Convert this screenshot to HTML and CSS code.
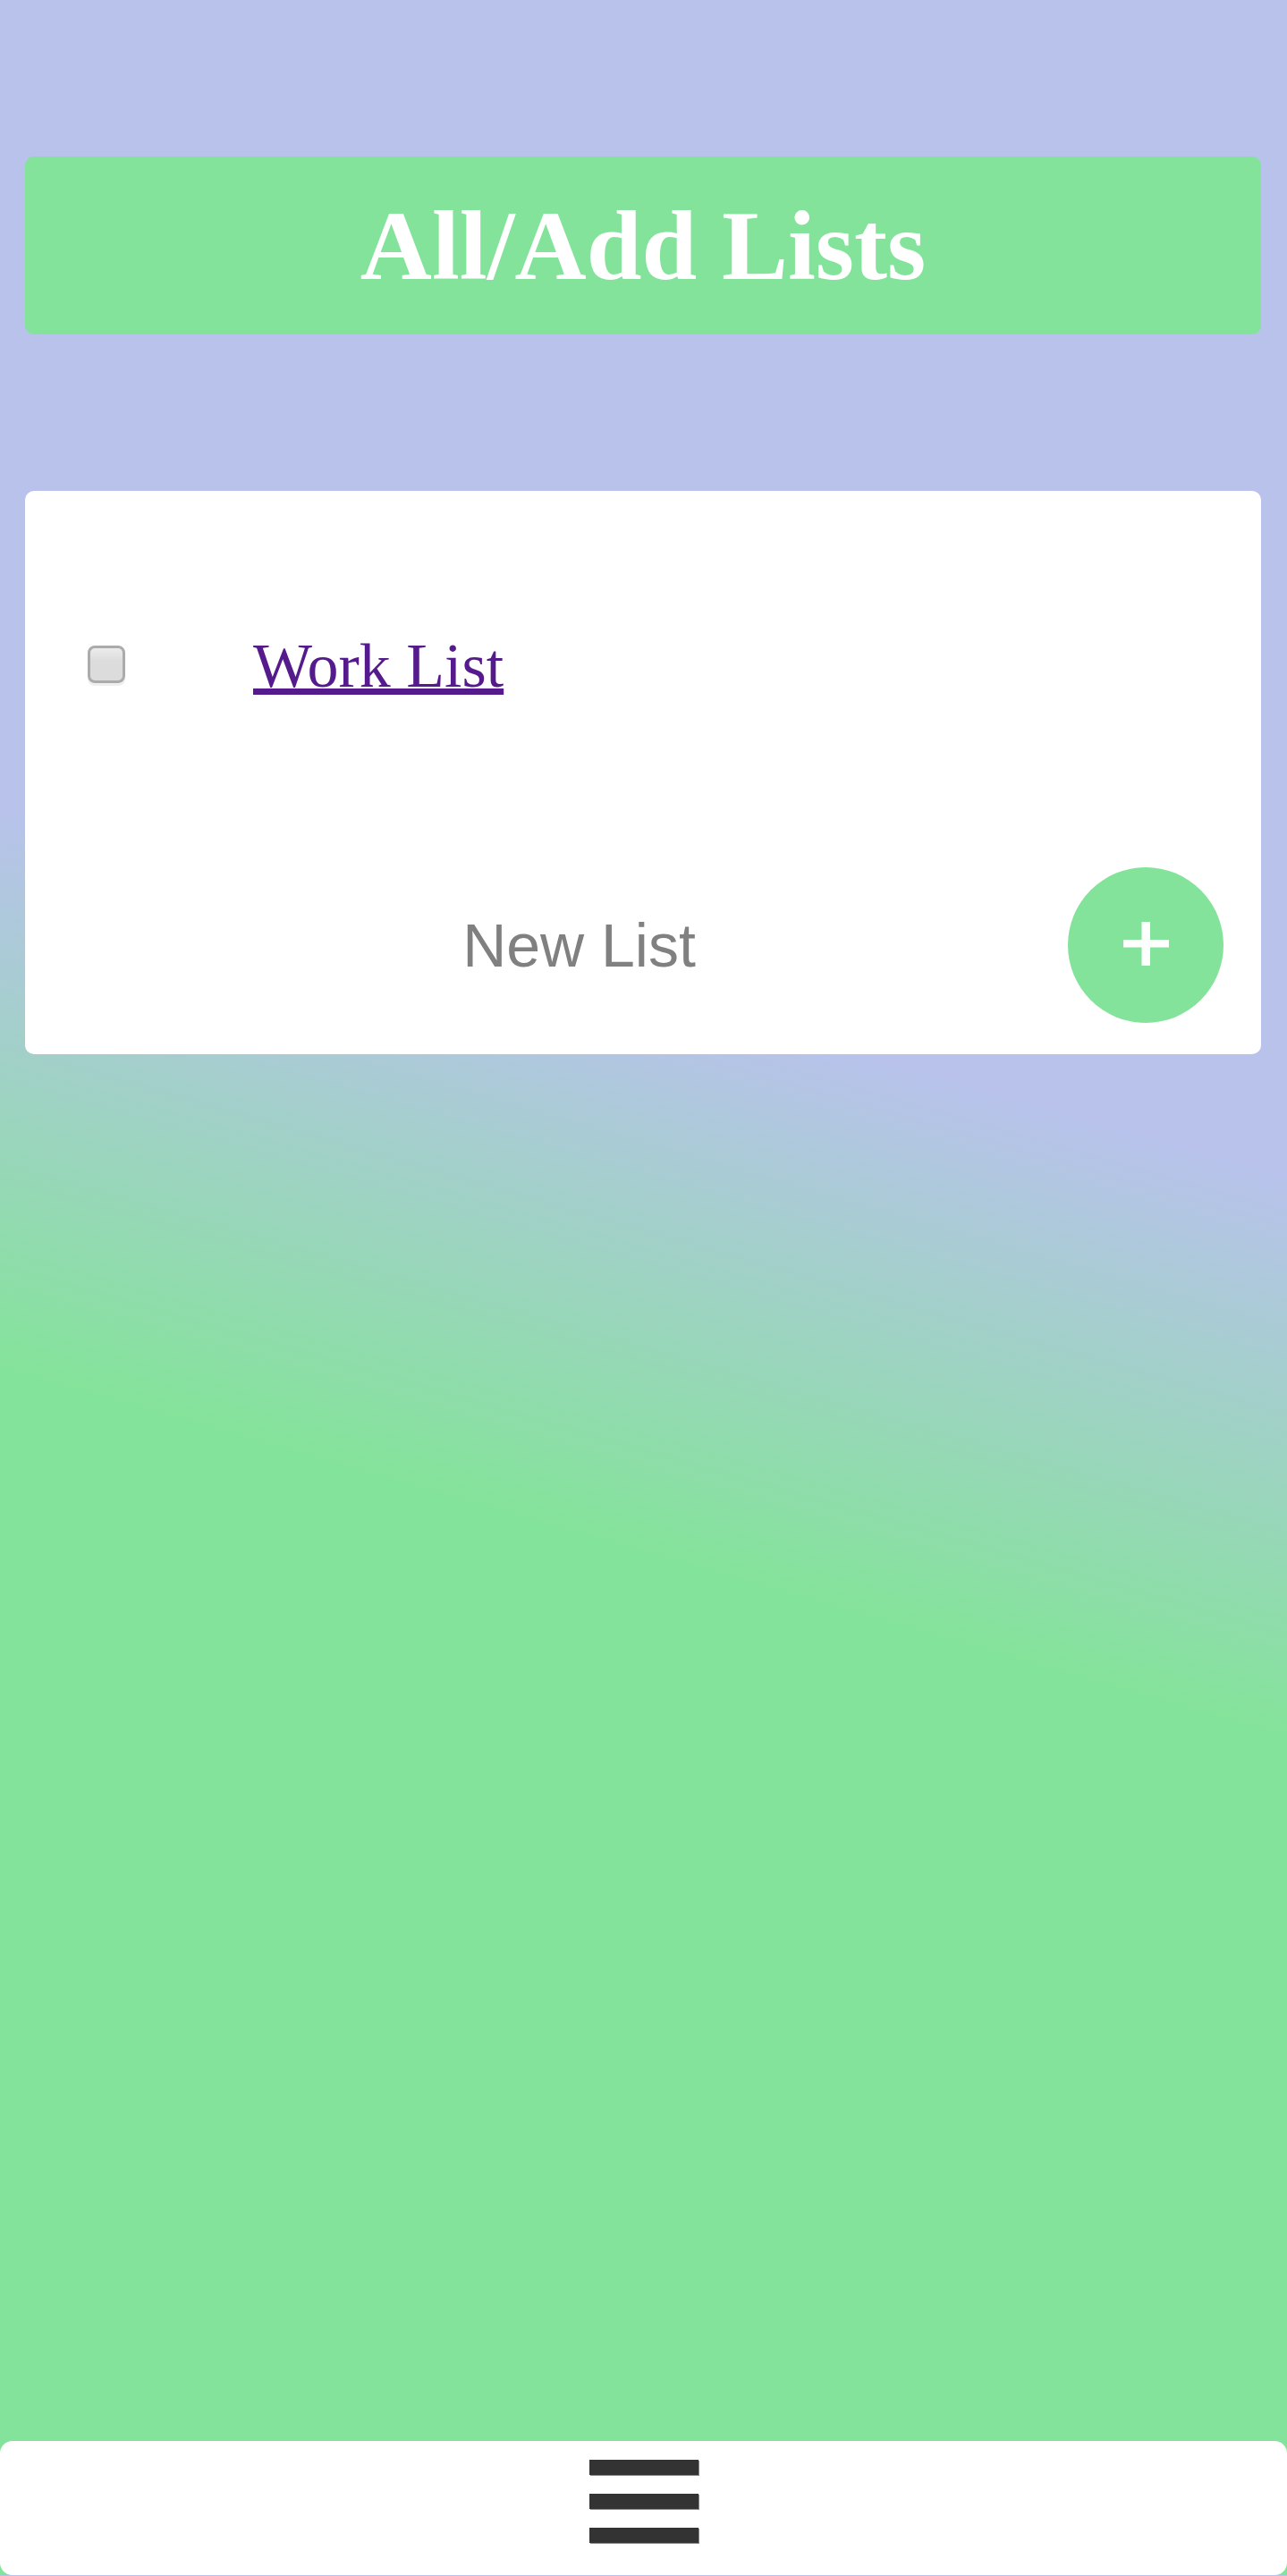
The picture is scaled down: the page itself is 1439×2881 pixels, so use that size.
FILE: index.html
```html
<!DOCTYPE html>
<html lang="en">
<head>
<meta charset="utf-8">
<title>All/Add Lists</title>
<link rel="stylesheet" href="styles.css">
</head>
<body>
  <header class="title-bar">
    <h1 class="title">All/Add Lists</h1>
  </header>

  <section class="card">
    <div class="list-row">
      <input class="check" type="checkbox" aria-label="Select Work List">
      <a class="list-link" href="#work">Work List</a>
    </div>
    <form class="new-row" onsubmit="return false">
      <input class="new-input" type="text" placeholder="New List">
      <button class="add-btn" type="button" aria-label="Add list">
        <svg width="51" height="49" viewBox="0 0 51 49" aria-hidden="true">
          <rect x="0" y="20" width="51" height="8.5" fill="#fff"/>
          <rect x="20.5" y="0" width="9.5" height="49" fill="#fff"/>
        </svg>
      </button>
    </form>
  </section>

  <nav class="bottom-bar">
    <span class="bar"></span>
    <span class="bar"></span>
    <span class="bar"></span>
  </nav>
</body>
</html>
```

FILE: styles.css
```css
html {
  margin: 0;
}

body {
  margin: 0;
  min-height: 2880px;
  display: flex;
  flex-direction: column;
  font-family: "Liberation Serif", "Times New Roman", serif;
  background: linear-gradient(16deg, #84e39a 41%, #b8c2eb 60%);
}

.title-bar {
  margin: 175px 29px 0 28px;
  height: 199px;
  border-radius: 10px;
  background: #84e39a;
  display: flex;
  align-items: center;
  justify-content: center;
}

.title {
  margin: 0;
  font-family: "Liberation Serif", "Times New Roman", serif;
  font-weight: bold;
  font-size: 111px;
  line-height: 1;
  color: #ffffff;
}

.card {
  box-sizing: border-box;
  margin: 175px 29px 0 28px;
  height: 630px;
  background: #ffffff;
  border-radius: 10px;
  padding: 0 42px 35px 70px;
  display: flex;
  flex-direction: column;
}

.list-row {
  margin-top: 157px;
  height: 77px;
  display: flex;
  align-items: center;
}

.check {
  appearance: none;
  -webkit-appearance: none;
  box-sizing: border-box;
  margin: 0 0 4px 0;
  width: 42px;
  height: 42px;
  border: 3.5px solid #ababab;
  border-radius: 8px;
  background: linear-gradient(#ececec, #dcdcdc 40%, #dcdcdc);
  box-shadow: 0 3px 0 #efefef;
}

.list-link {
  margin-left: 143px;
  font-size: 70px;
  line-height: 77px;
  color: #551a8b;
  text-decoration: underline;
  text-decoration-thickness: 7px;
  text-underline-offset: 2px;
}

.new-row {
  margin: auto 0 0 0;
  display: flex;
  align-items: stretch;
}

.new-input {
  flex: 1;
  min-width: 0;
  margin: 0;
  padding: 0 0 0 3px;
  border: none;
  outline: none;
  background: transparent;
  text-align: center;
  font-family: "Liberation Sans", Arial, sans-serif;
  font-size: 68px;
  color: #333;
}

.new-input::placeholder {
  color: #808080;
  opacity: 1;
}

.add-btn {
  width: 174px;
  height: 174px;
  margin: 0;
  padding: 0 0 3px 0;
  border: none;
  border-radius: 50%;
  background: #84e39a;
  display: flex;
  align-items: center;
  justify-content: center;
  cursor: pointer;
}

.bottom-bar {
  box-sizing: border-box;
  margin-top: auto;
  height: 150px;
  background: #ffffff;
  border-radius: 14px;
  padding-top: 21px;
  display: flex;
  flex-direction: column;
  align-items: center;
  gap: 21px;
}

.bar {
  display: block;
  width: 122px;
  height: 17px;
  background: #333333;
  box-shadow: 1px 1px 0 #8a8a8a;
}
```
